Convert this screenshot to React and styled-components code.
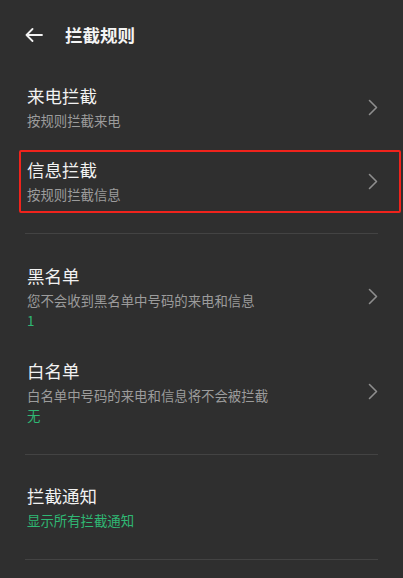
import React from "react";
import styled, { createGlobalStyle } from "styled-components";

const Global = createGlobalStyle`
  html, body {
    margin: 0;
    padding: 0;
    background: #2f2f2f;
  }
  body {
    font-family: "Noto Sans CJK SC", "Noto Sans", sans-serif;
    -webkit-font-smoothing: antialiased;
  }
`;

const Page = styled.div`
  width: 403px;
  min-height: 578px;
  background: #2f2f2f;
  display: flex;
  flex-direction: column;
`;

const Header = styled.header`
  height: 70px;
  display: flex;
  align-items: center;
  padding-left: 25px;
  gap: 22px;
`;

const BackButton = styled.button`
  display: flex;
  align-items: center;
  justify-content: center;
  padding: 0;
  border: 0;
  background: none;
  color: #f2f2f2;
  width: 18px;
  height: 14px;
`;

const HeaderTitle = styled.h1`
  margin: 0;
  font-size: 17.5px;
  line-height: 24px;
  font-weight: 700;
  color: #f4f4f4;
`;

const Group = styled.section`
  display: flex;
  flex-direction: column;
`;

const Divider = styled.div`
  height: 1px;
  margin: 15px 25px 15px 25px;
  background: #434343;
`;

const Row = styled.div`
  position: relative;
  height: ${(p) => p.$height}px;
  display: flex;
  align-items: center;
  justify-content: space-between;
  padding: 0 25px 0 27px;
  box-sizing: border-box;

  ${(p) =>
    p.$highlight &&
    `
    &::after {
      content: "";
      position: absolute;
      top: 6px;
      bottom: 5px;
      left: 19px;
      right: 2px;
      border: 2.5px solid #f0231c;
      border-radius: 2px;
      pointer-events: none;
    }
  `}
`;

const TextBlock = styled.div`
  display: flex;
  flex-direction: column;
`;

const Title = styled.div`
  font-size: 17.5px;
  line-height: 24px;
  color: #f2f2f2;
`;

const Subtitle = styled.div`
  font-size: 13.4px;
  line-height: 20px;
  margin-top: 2px;
  color: ${(p) => (p.$accent ? "#2fb874" : "#9c9c9c")};
`;

const Value = styled.div`
  font-size: 13.4px;
  line-height: 20px;
  color: #2fb874;
`;

const Chevron = () => (
  <svg width="10" height="17" viewBox="0 0 10 17" fill="none">
    <path
      d="M1.5 1.5L8.5 8.5L1.5 15.5"
      stroke="#8e8e8e"
      strokeWidth="1.6"
      strokeLinecap="round"
      strokeLinejoin="round"
    />
  </svg>
);

const BackArrow = () => (
  <svg width="18" height="14" viewBox="0 0 18 14" fill="none">
    <path
      d="M17 7H1.5M7.5 1L1.5 7L7.5 13"
      stroke="#f2f2f2"
      strokeWidth="1.8"
      strokeLinecap="round"
      strokeLinejoin="round"
    />
  </svg>
);

const ListRow = ({ title, subtitle, value, height, highlight, accent, arrow = true }) => (
  <Row $height={height} $highlight={highlight}>
    <TextBlock>
      <Title>{title}</Title>
      <Subtitle $accent={accent}>{subtitle}</Subtitle>
      {value && <Value>{value}</Value>}
    </TextBlock>
    {arrow && <Chevron />}
  </Row>
);

export default function App() {
  return (
    <Page>
      <Global />
      <Header>
        <BackButton aria-label="返回">
          <BackArrow />
        </BackButton>
        <HeaderTitle>拦截规则</HeaderTitle>
      </Header>
      <Group>
        <ListRow height={74} title="来电拦截" subtitle="按规则拦截来电" />
        <ListRow height={74} title="信息拦截" subtitle="按规则拦截信息" highlight />
      </Group>
      <Divider />
      <Group>
        <ListRow
          height={95}
          title="黑名单"
          subtitle="您不会收到黑名单中号码的来电和信息"
          value="1"
        />
        <ListRow
          height={95}
          title="白名单"
          subtitle="白名单中号码的来电和信息将不会被拦截"
          value="无"
        />
      </Group>
      <Divider />
      <Group>
        <ListRow
          height={74}
          title="拦截通知"
          subtitle="显示所有拦截通知"
          accent
          arrow={false}
        />
      </Group>
      <Divider />
    </Page>
  );
}
